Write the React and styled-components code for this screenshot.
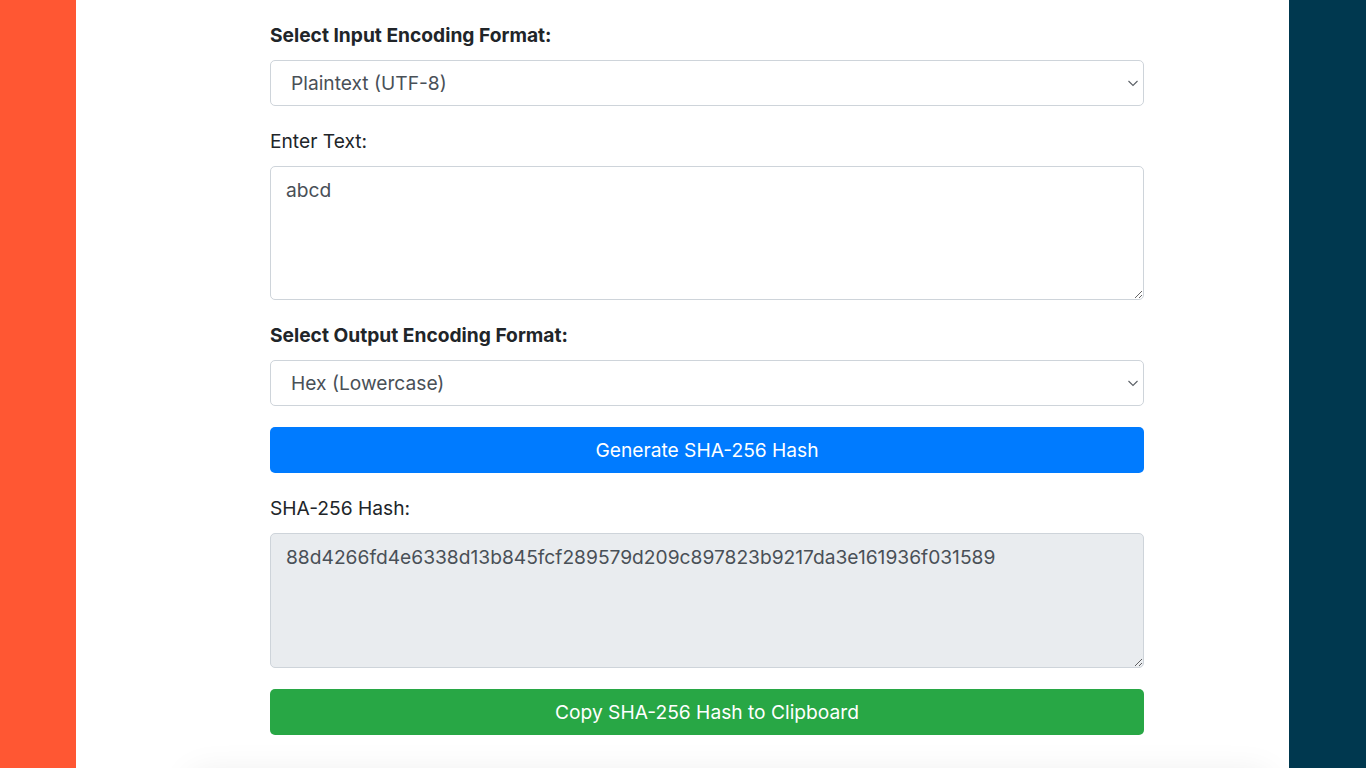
import React, { useState } from "react";
import styled, { createGlobalStyle } from "styled-components";

const GlobalStyle = createGlobalStyle`
  html, body {
    margin: 0;
    padding: 0;
    height: 100%;
    overflow: hidden;
  }
  body {
    font-family: Inter, "Liberation Sans", Arial, sans-serif;
    color: #212529;
  }
`;

const Page = styled.div`
  display: grid;
  grid-template-columns: 76px 1fr 77px;
  height: 100vh;
  overflow: hidden;
`;

const SideBar = styled.div`
  background-color: ${(p) => p.$color};
`;

const Main = styled.main`
  background-color: #fff;
  display: flex;
  flex-direction: column;
  align-items: flex-start;
  padding-left: 194px;
  overflow: hidden;
`;

const Form = styled.form`
  width: 874px;
  padding-top: 21px;
  display: flex;
  flex-direction: column;
  gap: 21px;
`;

const Group = styled.div`
  display: flex;
  flex-direction: column;
`;

const Label = styled.label`
  font-size: 19.2px;
  line-height: 29px;
  margin-bottom: 10px;
  font-weight: ${(p) => (p.$bold ? 700 : 400)};
  color: #212529;
`;

const SelectWrap = styled.div`
  position: relative;
`;

const Select = styled.select`
  appearance: none;
  width: 100%;
  height: 46px;
  padding: 0 40px 0 20px;
  font-family: inherit;
  font-size: 19.2px;
  color: #495057;
  background-color: #fff;
  border: 1px solid #ced4da;
  border-radius: 5px;
  outline: none;
`;

const Chevron = styled.svg`
  position: absolute;
  right: 4px;
  top: 17px;
  width: 14px;
  height: 12px;
  pointer-events: none;
`;

const TextArea = styled.textarea`
  box-sizing: border-box;
  width: 100%;
  height: ${(p) => p.$height}px;
  padding: 9px 15px;
  font-family: inherit;
  font-size: 19.2px;
  line-height: 28.8px;
  color: #495057;
  background-color: ${(p) => (p.readOnly ? "#e9ecef" : "#fff")};
  border: 1px solid #ced4da;
  border-radius: 5px;
  outline: none;
  resize: vertical;
`;

const Button = styled.button`
  height: 46px;
  width: 100%;
  border: none;
  border-radius: 5px;
  font-family: inherit;
  font-size: 19.2px;
  color: #fff;
  background-color: ${(p) => (p.$variant === "success" ? "#28a745" : "#007bff")};
  cursor: pointer;
`;

const ShadowCard = styled.div`
  width: 1080px;
  height: 200px;
  margin-top: 42px;
  margin-left: -80px;
  flex-shrink: 0;
  border-radius: 10px;
  background: #fff;
  box-shadow: 0 -4px 34px rgba(0, 0, 0, 0.08);
`;

function EncodingSelect({ value, options, onChange }) {
  return (
    <SelectWrap>
      <Select value={value} onChange={(e) => onChange(e.target.value)}>
        {options.map((o) => (
          <option key={o}>{o}</option>
        ))}
      </Select>
      <Chevron viewBox="0 0 14 12">
        <path d="M2.5 4 L7 8.5 L11.5 4" fill="none" stroke="#5a6066" strokeWidth="1.1" />
      </Chevron>
    </SelectWrap>
  );
}

export default function App() {
  const [input, setInput] = useState("Plaintext (UTF-8)");
  const [output, setOutput] = useState("Hex (Lowercase)");
  const [text, setText] = useState("abcd");
  const hash = "88d4266fd4e6338d13b845fcf289579d209c897823b9217da3e161936f031589";

  return (
    <>
      <GlobalStyle />
      <Page>
        <SideBar $color="#ff5733" />
        <Main>
          <Form onSubmit={(e) => e.preventDefault()}>
            <Group>
              <Label $bold>Select Input Encoding Format:</Label>
              <EncodingSelect
                value={input}
                onChange={setInput}
                options={["Plaintext (UTF-8)", "Hex", "Base64"]}
              />
            </Group>
            <Group>
              <Label>Enter Text:</Label>
              <TextArea $height={134} value={text} onChange={(e) => setText(e.target.value)} />
            </Group>
            <Group>
              <Label $bold>Select Output Encoding Format:</Label>
              <EncodingSelect
                value={output}
                onChange={setOutput}
                options={["Hex (Lowercase)", "Hex (Uppercase)", "Base64"]}
              />
            </Group>
            <Button type="submit">Generate SHA-256 Hash</Button>
            <Group>
              <Label>SHA-256 Hash:</Label>
              <TextArea $height={135} readOnly value={hash} />
            </Group>
            <Button type="button" $variant="success">
              Copy SHA-256 Hash to Clipboard
            </Button>
          </Form>
          <ShadowCard />
        </Main>
        <SideBar $color="#00384f" />
      </Page>
    </>
  );
}
